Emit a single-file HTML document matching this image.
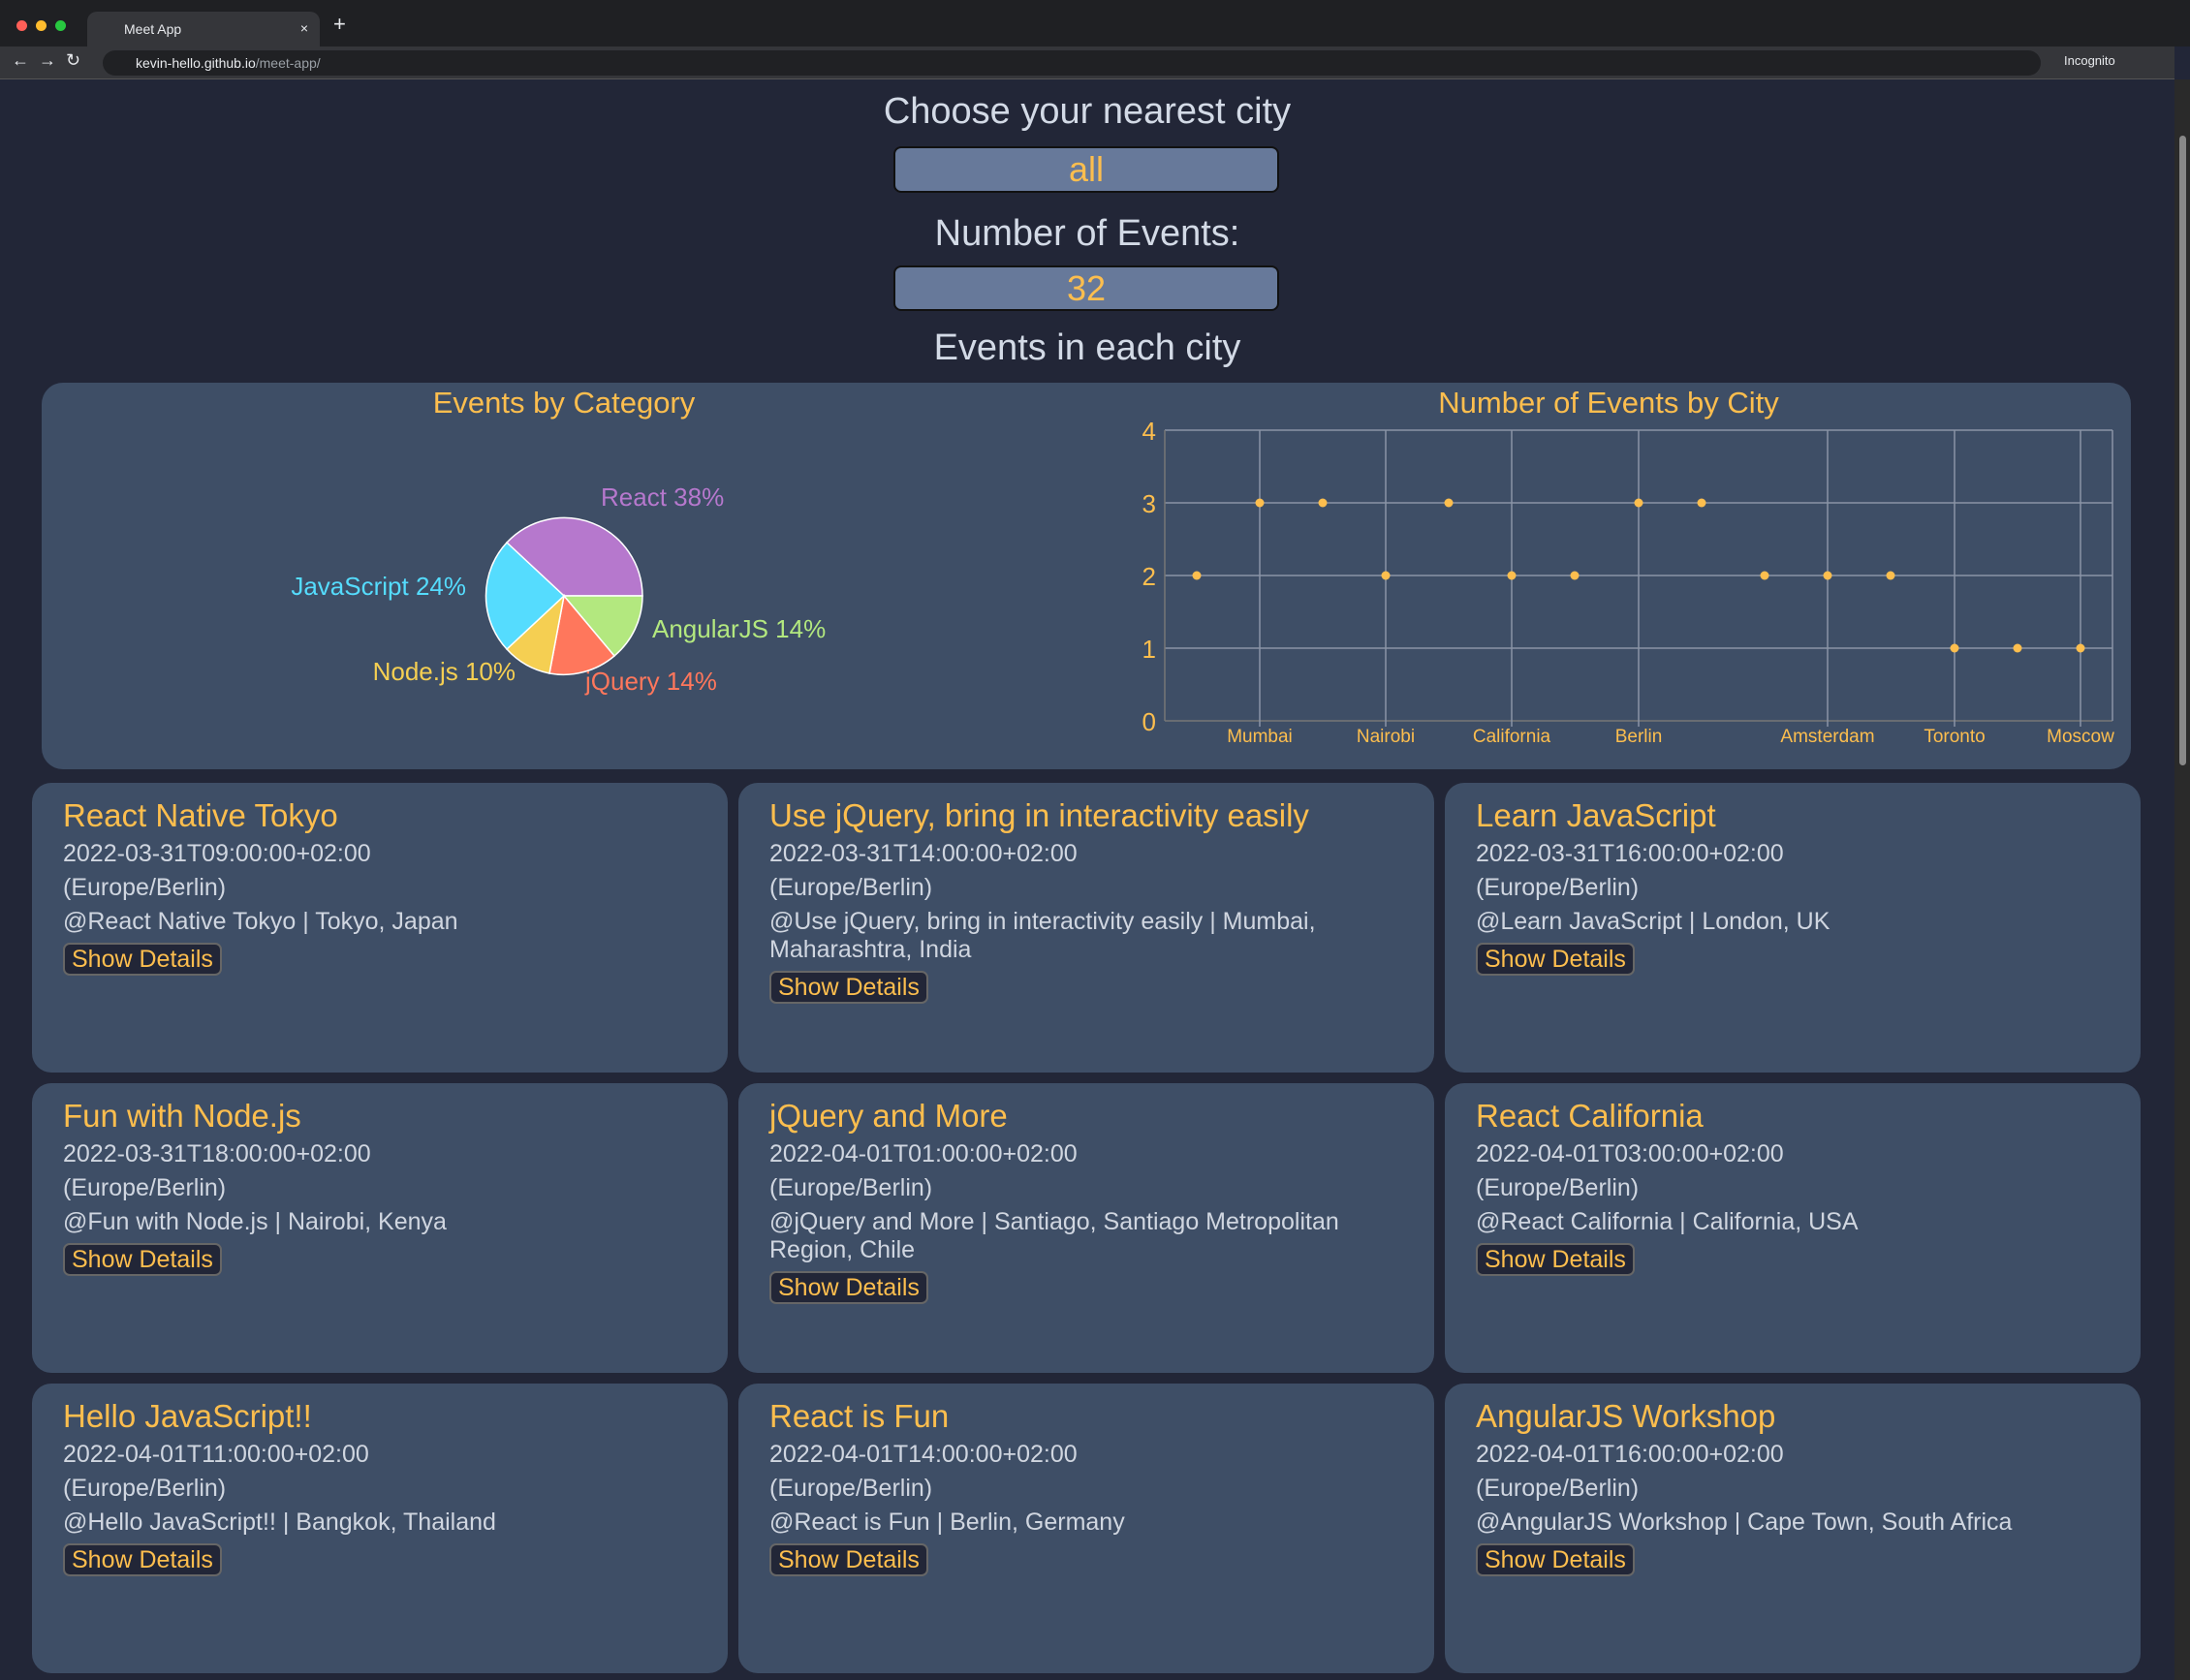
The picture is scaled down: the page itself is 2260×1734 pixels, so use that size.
<!DOCTYPE html>
<html><head><meta charset="utf-8"><style>
*{margin:0;padding:0;box-sizing:border-box}
body{width:2260px;height:1734px;background:#222637;font-family:"Liberation Sans",sans-serif;position:relative;overflow:hidden;color:#d3dae6}
.abs{position:absolute}
.tabbar{left:0;top:0;width:2260px;height:48px;background:#1f2023}
.tab{left:90px;top:12px;width:240px;height:36px;background:#35363a;border-radius:10px 10px 0 0;color:#e8eaed;font-size:14px;padding:10px 0 0 38px}
.addr{left:0;top:48px;width:2244px;height:34px;background:#35363a;border-bottom:1px solid #555}
.url{left:106px;top:52px;width:2000px;height:26px;background:#202124;border-radius:13px;color:#e8eaed;font-size:14px;padding:5px 0 0 34px}
.ctr{left:0;width:2244px;text-align:center}
.box{left:922px;width:398px;background:#67799a;border:2px solid #111;border-radius:8px;color:#fdbe4e;font-size:36px;text-align:center}
.panel{background:#3e4e66;border-radius:22px}
.card{background:#3e4e66;border-radius:20px;width:718px;height:299px;padding:12px 0 0 32px}
.card h2{font-weight:normal;color:#fdbe4e;font-size:33px;line-height:44px}
.card p{font-size:25px;line-height:35px;color:#d0d6e0}
.btn{display:inline-block;margin-top:4px;background:#222637;border:2px solid #666;border-radius:7px;color:#fdbe4e;font-size:25px;padding:1px 7px;line-height:28px}
</style></head><body>
<div class="abs tabbar"></div>
<div class="abs" style="left:17px;top:21px;width:11px;height:11px;border-radius:50%;background:#ff5f57"></div>
<div class="abs" style="left:37px;top:21px;width:11px;height:11px;border-radius:50%;background:#febc2e"></div>
<div class="abs" style="left:57px;top:21px;width:11px;height:11px;border-radius:50%;background:#28c840"></div>
<div class="abs tab">Meet App<span style="position:absolute;right:12px;top:9px">×</span></div>
<div class="abs" style="left:344px;top:12px;color:#e8eaed;font-size:22px">+</div>
<div class="abs addr"></div>
<div class="abs" style="left:12px;top:52px;color:#e8eaed;font-size:18px">←&nbsp; →&nbsp; ↻</div>
<div class="abs url">kevin-hello.github.io<span style="color:#9aa0a6">/meet-app/</span></div>
<div class="abs" style="left:2130px;top:55px;color:#e8eaed;font-size:13px">Incognito</div>
<div class="abs" style="left:2244px;top:82px;width:16px;height:1652px;background:#2a2a2a"></div>
<div class="abs" style="left:2249px;top:140px;width:7px;height:650px;background:#888;border-radius:4px"></div>

<div class="abs ctr" style="top:94px;font-size:38px">Choose your nearest city</div>
<div class="abs box" style="top:151px;height:48px;line-height:44px">all</div>
<div class="abs ctr" style="top:220px;font-size:38px">Number of Events:</div>
<div class="abs box" style="top:274px;height:47px;line-height:43px">32</div>
<div class="abs ctr" style="top:338px;font-size:38px">Events in each city</div>

<div class="abs panel" style="left:43px;top:395px;width:2156px;height:399px"></div>
<svg class="abs" style="left:0;top:0" width="2260" height="800" font-family="Liberation Sans, sans-serif">
<text x="582" y="426" fill="#fdbe4e" font-size="31" text-anchor="middle">Events by Category</text>
<text x="1660" y="426" fill="#fdbe4e" font-size="31" text-anchor="middle">Number of Events by City</text>
<g stroke="#fff" stroke-width="1.5">
<path d="M582 615 L523 560 A81 81 0 0 1 663 615 Z" fill="#b678cd"/>
<path d="M582 615 L663 615 A81 81 0 0 1 634 677 Z" fill="#b3e87f"/>
<path d="M582 615 L634 677 A81 81 0 0 1 567 695 Z" fill="#ff775c"/>
<path d="M582 615 L567 695 A81 81 0 0 1 523 670 Z" fill="#f5cf52"/>
<path d="M582 615 L523 670 A81 81 0 0 1 523 560 Z" fill="#55dcfe"/>
</g>
<g font-size="26">
<text x="620" y="522" fill="#b678cd">React 38%</text>
<text x="481" y="614" fill="#55dcfe" text-anchor="end">JavaScript 24%</text>
<text x="673" y="658" fill="#b3e87f">AngularJS 14%</text>
<text x="532" y="702" fill="#f5cf52" text-anchor="end">Node.js 10%</text>
<text x="604" y="712" fill="#ff775c">jQuery 14%</text>
</g>
<g stroke="#8a94a6" stroke-width="1.5">
<line x1="1202" y1="444" x2="2180" y2="444"/><line x1="1202" y1="519" x2="2180" y2="519"/>
<line x1="1202" y1="594" x2="2180" y2="594"/><line x1="1202" y1="669" x2="2180" y2="669"/>
<line x1="1202" y1="744" x2="2180" y2="744" stroke="#777"/>
<line x1="1202" y1="444" x2="1202" y2="744" stroke="#777"/><line x1="2180" y1="444" x2="2180" y2="744"/>
<line x1="1300" y1="444" x2="1300" y2="750"/><line x1="1430" y1="444" x2="1430" y2="750"/>
<line x1="1560" y1="444" x2="1560" y2="750"/><line x1="1691" y1="444" x2="1691" y2="750"/>
<line x1="1886" y1="444" x2="1886" y2="750"/><line x1="2017" y1="444" x2="2017" y2="750"/>
<line x1="2147" y1="444" x2="2147" y2="750"/>
</g>
<g fill="#fdbe4e" font-size="26" text-anchor="end">
<text x="1193" y="454">4</text><text x="1193" y="529">3</text><text x="1193" y="604">2</text><text x="1193" y="679">1</text><text x="1193" y="754">0</text>
</g>
<g fill="#fdbe4e" font-size="19" text-anchor="middle">
<text x="1300" y="766">Mumbai</text><text x="1430" y="766">Nairobi</text><text x="1560" y="766">California</text><text x="1691" y="766">Berlin</text><text x="1886" y="766">Amsterdam</text><text x="2017" y="766">Toronto</text><text x="2147" y="766">Moscow</text>
</g>
<g fill="#fdbe4e">
<circle cx="1235" cy="594" r="4.5"/><circle cx="1300" cy="519" r="4.5"/><circle cx="1365" cy="519" r="4.5"/><circle cx="1430" cy="594" r="4.5"/><circle cx="1495" cy="519" r="4.5"/><circle cx="1560" cy="594" r="4.5"/><circle cx="1625" cy="594" r="4.5"/><circle cx="1691" cy="519" r="4.5"/><circle cx="1756" cy="519" r="4.5"/><circle cx="1821" cy="594" r="4.5"/><circle cx="1886" cy="594" r="4.5"/><circle cx="1951" cy="594" r="4.5"/><circle cx="2017" cy="669" r="4.5"/><circle cx="2082" cy="669" r="4.5"/><circle cx="2147" cy="669" r="4.5"/>
</g>
</svg>

<div class="abs card" style="left:33px;top:808px"><h2>React Native Tokyo</h2><p>2022-03-31T09:00:00+02:00</p><p>(Europe/Berlin)</p><p>@React Native Tokyo | Tokyo, Japan</p><span class="btn">Show Details</span></div>
<div class="abs card" style="left:762px;top:808px"><h2>Use jQuery, bring in interactivity easily</h2><p>2022-03-31T14:00:00+02:00</p><p>(Europe/Berlin)</p><p style="line-height:29px;padding-top:3px;margin-bottom:3px">@Use jQuery, bring in interactivity easily | Mumbai,<br>Maharashtra, India</p><span class="btn">Show Details</span></div>
<div class="abs card" style="left:1491px;top:808px"><h2>Learn JavaScript</h2><p>2022-03-31T16:00:00+02:00</p><p>(Europe/Berlin)</p><p>@Learn JavaScript | London, UK</p><span class="btn">Show Details</span></div>

<div class="abs card" style="left:33px;top:1118px"><h2>Fun with Node.js</h2><p>2022-03-31T18:00:00+02:00</p><p>(Europe/Berlin)</p><p>@Fun with Node.js | Nairobi, Kenya</p><span class="btn">Show Details</span></div>
<div class="abs card" style="left:762px;top:1118px"><h2>jQuery and More</h2><p>2022-04-01T01:00:00+02:00</p><p>(Europe/Berlin)</p><p style="line-height:29px;padding-top:3px;margin-bottom:3px">@jQuery and More | Santiago, Santiago Metropolitan<br>Region, Chile</p><span class="btn">Show Details</span></div>
<div class="abs card" style="left:1491px;top:1118px"><h2>React California</h2><p>2022-04-01T03:00:00+02:00</p><p>(Europe/Berlin)</p><p>@React California | California, USA</p><span class="btn">Show Details</span></div>

<div class="abs card" style="left:33px;top:1428px"><h2>Hello JavaScript!!</h2><p>2022-04-01T11:00:00+02:00</p><p>(Europe/Berlin)</p><p>@Hello JavaScript!! | Bangkok, Thailand</p><span class="btn">Show Details</span></div>
<div class="abs card" style="left:762px;top:1428px"><h2>React is Fun</h2><p>2022-04-01T14:00:00+02:00</p><p>(Europe/Berlin)</p><p>@React is Fun | Berlin, Germany</p><span class="btn">Show Details</span></div>
<div class="abs card" style="left:1491px;top:1428px"><h2>AngularJS Workshop</h2><p>2022-04-01T16:00:00+02:00</p><p>(Europe/Berlin)</p><p>@AngularJS Workshop | Cape Town, South Africa</p><span class="btn">Show Details</span></div>
</body></html>
